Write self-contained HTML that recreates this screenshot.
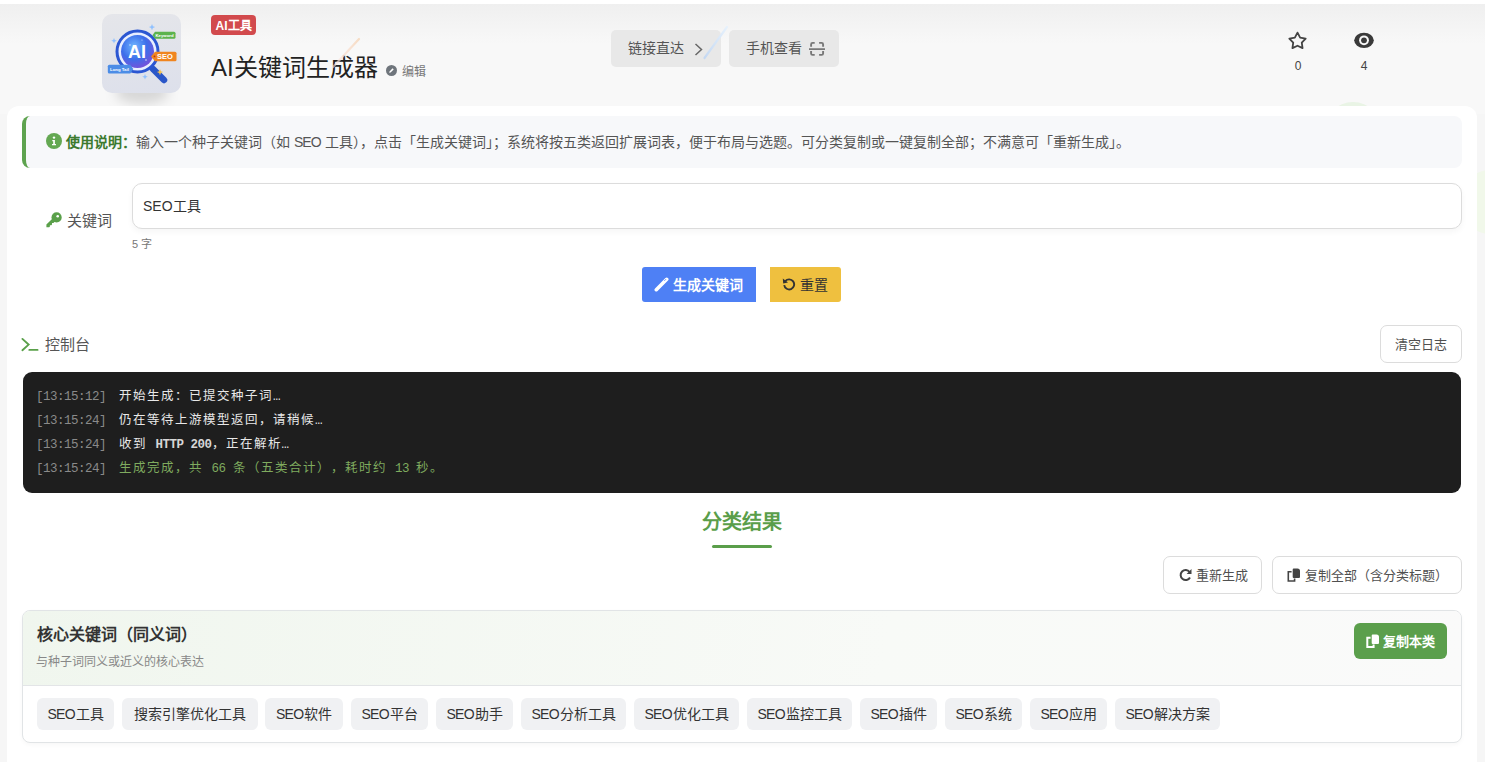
<!DOCTYPE html>
<html lang="zh-CN">
<head>
<meta charset="utf-8">
<style>
*{box-sizing:border-box;margin:0;padding:0}
html,body{width:1485px;height:762px;overflow:hidden}
body{font-family:"Liberation Sans",sans-serif;background:#f6f6f6;position:relative;color:#333}
.abs{position:absolute}
svg{display:block}
#topstrip{left:0;top:0;width:1485px;height:4px;background:#fff}
#hdr{left:0;top:4px;width:1485px;height:110px;background:linear-gradient(#efefef,#f8f8f8 40px,#f8f8f8)}
#logo{left:102px;top:14px;width:79px;height:79px;border-radius:10px;background:linear-gradient(170deg,#e5e6ea,#dde0eb)}
#logoshadow{left:115px;top:80px;width:54px;height:24px;border-radius:50%;background:rgba(0,0,0,.13);filter:blur(6px)}
#badge{left:211px;top:15px;width:45px;height:20px;border-radius:4px;background:#d24a4d;color:#fff;font-size:12px;font-weight:bold;line-height:22px;text-align:center}
#title{left:211px;top:52px;font-size:24px;line-height:32px;color:#222;white-space:nowrap}
#edit{left:402px;top:65px;font-size:12px;color:#777;white-space:nowrap;line-height:14px}
.tbtn{top:30px;width:110px;height:37px;border-radius:5px;background:#e8e8e8;color:#555;font-size:14px;line-height:37px;white-space:nowrap}
.stat{font-size:12px;color:#444;line-height:14px;text-align:center;width:30px}
#card{left:7px;top:106px;width:1470px;height:700px;background:#fff;border-radius:12px}
#notice{left:22px;top:116px;width:1440px;height:52px;background:#f7f8fa;border-left:4px solid #5ea34f;border-radius:8px;font-size:14px;line-height:52px;color:#555;white-space:nowrap}
#notice b{color:#3c7a2e}
#kwlabel{left:67px;top:211.5px;font-size:15px;line-height:18px;color:#555}
#input{left:132px;top:183px;width:1330px;height:46px;border:1px solid #dcdcdc;border-radius:10px;background:#fff;box-shadow:0 3px 6px rgba(0,0,0,.04);font-size:14px;line-height:44px;padding-left:10px;color:#333}
#count{left:132px;top:238px;font-size:11px;color:#777;line-height:13px}
.btn{height:35px;top:267px;font-size:14px;line-height:37px;white-space:nowrap}
#gen{left:642px;width:114px;background:#4e80f5;color:#fff;border-radius:3px 0 0 3px;font-weight:bold}
#reset{left:770px;width:71px;background:#efc03f;color:#333;border-radius:0 3px 3px 0}
#conlabel{left:45px;top:336px;font-size:15px;line-height:18px;color:#555}
.obtn{border:1px solid #dcdcdc;border-radius:7px;background:#fff;font-size:13px;color:#505050;white-space:nowrap;text-align:center}
#console{text-spacing-trim:space-all;left:23px;top:372px;width:1438px;height:121px;background:#1e1e1e;border-radius:9px;font-family:"Liberation Mono",monospace;font-size:12.5px;letter-spacing:-0.5px;color:#e8e8e8;padding:14px 0 0 13px}
#console div{height:23.9px;line-height:23.9px;white-space:nowrap}
#console .t{color:#8a8a8a;margin-right:13px}
#console .c{letter-spacing:1px}
#console .g{color:#7fab5f}
#console b{color:#d6d6d6}
#restitle{left:702px;top:509px;font-size:20px;line-height:26px;font-weight:bold;color:#5a9e4a;white-space:nowrap}
#resbar{left:712px;top:545px;width:60px;height:3px;border-radius:2px;background:#5a9e4a}
#cat{left:22px;top:610px;width:1440px;height:133px;border:1px solid #e1e4e6;border-radius:8px;background:#fff;overflow:hidden;box-shadow:0 2px 4px rgba(0,0,0,.03)}
#cathead{left:0;top:0;width:1438px;height:75px;border-bottom:1px solid #e3e5e7;background:linear-gradient(100deg,#f0f6ee,#f8faf7 60%,#fafafa)}
#cattitle{left:37px;top:625px;font-size:16px;line-height:20px;font-weight:bold;color:#333;white-space:nowrap}
#catsub{left:36px;top:655px;font-size:12px;line-height:15px;color:#888;white-space:nowrap}
#copycat{left:1354px;top:623px;width:93px;height:36px;border-radius:6px;background:#5b9f4c;color:#fff;font-size:13px;font-weight:bold;line-height:37px;white-space:nowrap}
.chip i{font-style:normal;letter-spacing:-0.7px}
.chip{top:698px;height:32px;border-radius:6px;background:#f0f1f3;color:#333;font-size:14px;line-height:32px;text-align:center;white-space:nowrap}
</style>
</head>
<body>
<div class="abs" id="topstrip"></div>
<div class="abs" id="hdr"></div>

<!-- logo -->
<div class="abs" id="logoshadow"></div>
<div class="abs" id="logo">
<svg width="79" height="79" viewBox="0 0 79 79">
  <defs>
    <radialGradient id="lens" cx="40%" cy="35%" r="70%">
      <stop offset="0" stop-color="#6fb6ff"/>
      <stop offset="0.55" stop-color="#3d6fea"/>
      <stop offset="1" stop-color="#7a4fd8"/>
    </radialGradient>
  </defs>
  <line x1="51" y1="55" x2="62" y2="66" stroke="#2a56c8" stroke-width="6.5" stroke-linecap="round"/>
  <circle cx="35.5" cy="37.5" r="20.5" fill="#e8eeff" stroke="#2b56d2" stroke-width="3"/>
  <circle cx="35.5" cy="37.5" r="16.5" fill="url(#lens)"/>
  <text x="35" y="43.5" text-anchor="middle" font-family="Liberation Sans" font-weight="bold" font-size="18" fill="#fff">AI</text>
  <path d="M53 17.7 h19 a1.5 1.5 0 0 1 1.5 1.5 v4 a1.5 1.5 0 0 1 -1.5 1.5 h-19 l-2.5 -3.5 z" fill="#5cb34e"/>
  <text x="62.5" y="22.7" text-anchor="middle" font-family="Liberation Sans" font-weight="bold" font-size="4.3" fill="#fff">Keyword</text>
  <path d="M53 37.7 h20 a1.5 1.5 0 0 1 1.5 1.5 v6.5 a1.5 1.5 0 0 1 -1.5 1.5 h-20 l-4 -4.7 z" fill="#f0851f"/>
  <circle cx="52.5" cy="42.4" r="0.9" fill="#b8321a"/>
  <text x="63" y="45.3" text-anchor="middle" font-family="Liberation Sans" font-weight="bold" font-size="7.5" fill="#fff">SEO</text>
  <path d="M7.3 50.8 h21 l3 4.3 l-3 4.3 h-21 a1.5 1.5 0 0 1 -1.5 -1.5 v-5.6 a1.5 1.5 0 0 1 1.5 -1.5 z" fill="#4b8ce6"/>
  <text x="17.5" y="56.6" text-anchor="middle" font-family="Liberation Sans" font-weight="bold" font-size="4.3" fill="#fff">Long Tail</text>
  <path d="M12 24 l0.8 2 l2 0.8 l-2 0.8 l-0.8 2 l-0.8 -2 l-2 -0.8 l2 -0.8 z" fill="#8ec0ff"/>
  <path d="M50 10 l0.9 2.2 l2.2 0.9 l-2.2 0.9 l-0.9 2.2 l-0.9 -2.2 l-2.2 -0.9 l2.2 -0.9 z" fill="#8ec0ff"/>
  <path d="M58 55 l0.9 2.2 l2.2 0.9 l-2.2 0.9 l-0.9 2.2 l-0.9 -2.2 l-2.2 -0.9 l2.2 -0.9 z" fill="#f3c14e"/>
  <path d="M43 60 l0.8 2 l2 0.8 l-2 0.8 l-0.8 2 l-0.8 -2 l-2 -0.8 l2 -0.8 z" fill="#8ec0ff"/>
  <circle cx="28" cy="31" r="0.7" fill="#fff" opacity=".8"/>
  <circle cx="44" cy="46" r="0.8" fill="#fff" opacity=".8"/>
  <circle cx="40" cy="26" r="0.6" fill="#fff" opacity=".7"/>
</svg>
</div>

<div class="abs" id="badge">AI工具</div>
<div class="abs" id="title">AI关键词生成器</div>
<svg class="abs" style="left:386px;top:65px" width="11" height="11" viewBox="0 0 11 11"><circle cx="5.5" cy="5.5" r="5.5" fill="#6f757c"/><path d="M3.2 7.8 L3.5 6.4 L6.6 3.3 L7.7 4.4 L4.6 7.5 Z" fill="#fff"/></svg>
<div class="abs" id="edit">编辑</div>

<div class="abs tbtn" style="left:611px;padding-left:17px">链接直达</div>
<svg class="abs" style="left:694px;top:43px" width="10" height="13" viewBox="0 0 10 13"><path d="M1.5 1 L7.5 6.5 L1.5 12" fill="none" stroke="#666" stroke-width="1.5"/></svg>
<svg class="abs" style="left:700px;top:22px" width="32" height="40" viewBox="0 0 32 40"><defs><linearGradient id="sb" x1="0" y1="1" x2="1" y2="0"><stop offset="0" stop-color="#c4d8f2"/><stop offset="1" stop-color="#e6f1fc"/></linearGradient></defs><line x1="4.5" y1="36" x2="27" y2="5" stroke="url(#sb)" stroke-width="2.2" stroke-linecap="round"/></svg>
<svg class="abs" style="left:328px;top:34px" width="36" height="38" viewBox="0 0 36 38"><defs><linearGradient id="so" x1="0" y1="1" x2="1" y2="0"><stop offset="0" stop-color="#fbe4e0" stop-opacity="0.6"/><stop offset="1" stop-color="#f6dcc4"/></linearGradient></defs><line x1="5" y1="33" x2="31" y2="5" stroke="url(#so)" stroke-width="2.2" stroke-linecap="round"/></svg>
<div class="abs tbtn" style="left:729px;padding-left:17px">手机查看</div>
<svg class="abs" style="left:809px;top:40px" width="16" height="17" viewBox="0 0 16 17"><path d="M2.1 6.7 V4.4 a1.5 1.5 0 0 1 1.5 -1.5 H5.7 M10.1 2.9 H12.6 a1.5 1.5 0 0 1 1.5 1.5 V6.7 M14.1 11.1 V13.4 a1.5 1.5 0 0 1 -1.5 1.5 H10.1 M5.7 14.9 H3.6 a1.5 1.5 0 0 1 -1.5 -1.5 V11.1" fill="none" stroke="#777" stroke-width="1.9"/><line x1="0.3" y1="9.2" x2="15.7" y2="9.2" stroke="#777" stroke-width="1.8" stroke-linecap="round"/></svg>

<svg class="abs" style="left:1287px;top:30px" width="21" height="21" viewBox="0 0 21 21"><path d="M10.50 2.60 L13.15 7.56 L18.68 8.54 L14.78 12.59 L15.55 18.16 L10.50 15.70 L5.45 18.16 L6.22 12.59 L2.32 8.54 L7.85 7.56 Z" fill="none" stroke="#444" stroke-width="1.8" stroke-linejoin="round"/></svg>
<div class="abs stat" style="left:1283px;top:59px">0</div>
<svg class="abs" style="left:1353px;top:32px" width="22" height="17" viewBox="0 0 22 17"><ellipse cx="11" cy="8.3" rx="9.8" ry="7.6" fill="#3a3a3a"/><circle cx="11" cy="8.3" r="4.9" fill="#f8f8f8"/><circle cx="11" cy="8.3" r="2.9" fill="#3a3a3a"/></svg>
<div class="abs stat" style="left:1349px;top:59px">4</div>

<!-- main card -->
<div class="abs" style="left:1324px;top:102px;width:58px;height:58px;border-radius:50%;background:#e9f4e5"></div>
<div class="abs" style="left:1460px;top:170px;width:60px;height:64px;border-radius:50%;background:#f1f8ea"></div>
<div class="abs" id="card"></div>

<div class="abs" id="notice"><span style="display:inline-block;width:19px"></span><span style="display:inline-block;width:21px"></span><b>使用说明：</b>输入一个种子关键词（如 <span style="letter-spacing:-0.9px">SEO</span> 工具），点击「生成关键词」；系统将按五类返回扩展词表，便于布局与选题。可分类复制或一键复制全部；不满意可「重新生成」。</div>
<svg class="abs" style="left:45.5px;top:133px" width="16" height="16" viewBox="0 0 16 16"><circle cx="8" cy="8" r="8" fill="#64a852"/><circle cx="8" cy="4.6" r="1.2" fill="#fff"/><path d="M6.3 7 H8.9 V11 H10 V12.2 H6 V11 H7.2 V8.2 H6.3 Z" fill="#fff"/></svg>

<svg class="abs" style="left:46px;top:212px" width="16" height="16" viewBox="0 0 16 16"><circle cx="10.6" cy="5.4" r="5.1" fill="#5aa04a"/><circle cx="11.7" cy="4.3" r="1.3" fill="#fff"/><path d="M6.8 6.2 L0.4 12.6 L0.4 15.3 L3.2 15.3 L3.9 14.6 L3.9 13.2 L5.3 13.2 L6 12.5 L6 11.1 L7.4 11.1 L9.8 8.7 Z" fill="#5aa04a"/></svg>
<div class="abs" id="kwlabel">关键词</div>
<div class="abs" id="input">SEO工具</div>
<div class="abs" id="count">5 字</div>

<div class="abs btn" id="gen"><span style="display:inline-block;width:31px"></span>生成关键词</div>
<svg class="abs" style="left:654px;top:277px" width="15" height="15" viewBox="0 0 15 15"><line x1="2.3" y1="12.7" x2="12.7" y2="2.3" stroke="#fff" stroke-width="3.6" stroke-linecap="round"/><line x1="10.6" y1="3.6" x2="11.8" y2="2.4" stroke="#4e80f5" stroke-width="0.8" stroke-linecap="round"/></svg>
<div class="abs btn" id="reset"><span style="display:inline-block;width:30px"></span>重置</div>
<svg class="abs" style="left:782px;top:277px" width="14" height="14" viewBox="0 0 14 14"><path d="M3.3 4.2 A5 5 0 1 1 2.2 8.2" fill="none" stroke="#333" stroke-width="1.9"/><path d="M0.8 1.4 L1.2 6.4 L6 5.4 Z" fill="#333"/></svg>

<!-- console -->
<svg class="abs" style="left:21px;top:337px" width="18" height="15" viewBox="0 0 18 15"><path d="M1.4 1.9 L7.6 7.6 L1.4 13.2" fill="none" stroke="#5aa04a" stroke-width="1.9" stroke-linecap="round"/><line x1="8.3" y1="12.9" x2="16.6" y2="12.9" stroke="#5aa04a" stroke-width="1.8" stroke-linecap="round"/></svg>
<div class="abs" id="conlabel">控制台</div>
<div class="abs obtn" style="left:1380px;top:325px;width:82px;height:38px;line-height:37px">清空日志</div>
<div class="abs" id="console">
<div><span class="t">[13:15:12]</span><span class="c">开始生成：已提交种子词</span>…</div>
<div><span class="t">[13:15:24]</span><span class="c">仍在等待上游模型返回，请稍候</span>…</div>
<div><span class="t">[13:15:24]</span><span class="c">收到 </span><b>HTTP 200</b><span class="c">，正在解析</span>…</div>
<div class="g"><span class="t">[13:15:24]</span><span class="c">生成完成，共 </span>66 <span class="c">条（五类合计），耗时约 </span>13 <span class="c">秒。</span></div>
</div>

<!-- results -->
<div class="abs" id="restitle">分类结果</div>
<div class="abs" id="resbar"></div>

<div class="abs obtn" style="left:1163px;top:556px;width:99px;height:38px;line-height:37px"><span style="display:inline-block;width:18px"></span>重新生成</div>
<svg class="abs" style="left:1179px;top:568px" width="13" height="14" viewBox="0 0 13 14"><path d="M10.6 4 A5 5 0 1 0 11 9.5" fill="none" stroke="#444" stroke-width="2"/><path d="M12.5 1 L12.5 6 L7.6 6 Z" fill="#444"/></svg>
<div class="abs obtn" style="left:1272px;top:556px;width:190px;height:38px;line-height:37px"><span style="display:inline-block;width:18px"></span>复制全部（含分类标题）</div>
<svg class="abs" style="left:1287px;top:568px" width="14" height="14" viewBox="0 0 14 14"><path d="M5.7 1.5 a1 1 0 0 1 1 -1 H10.5 a2.5 2.5 0 0 1 2.5 2.5 V9 a1 1 0 0 1 -1 1 H6.7 a1 1 0 0 1 -1 -1 Z" fill="#444"/><path d="M4.6 3.8 H1.3 V13 H7.6 V10.6" fill="none" stroke="#444" stroke-width="1.6"/></svg>

<div class="abs" id="cat"><div class="abs" id="cathead"></div></div>
<div class="abs" id="cattitle">核心关键词（同义词）</div>
<div class="abs" id="catsub">与种子词同义或近义的核心表达</div>
<div class="abs" id="copycat"><span style="display:inline-block;width:29px"></span>复制本类</div>
<svg class="abs" style="left:1366px;top:634px" width="14" height="14" viewBox="0 0 14 14"><path d="M5.7 1.5 a1 1 0 0 1 1 -1 H10.5 a2.5 2.5 0 0 1 2.5 2.5 V9 a1 1 0 0 1 -1 1 H6.7 a1 1 0 0 1 -1 -1 Z" fill="#fff"/><path d="M4.6 3.8 H1.3 V13 H7.6 V10.6" fill="none" stroke="#fff" stroke-width="2"/></svg>

<div class="abs chip" style="left:37px;width:77px"><i>SE</i>O工具</div>
<div class="abs chip" style="left:122px;width:136px">搜索引擎优化工具</div>
<div class="abs chip" style="left:265px;width:78px"><i>SE</i>O软件</div>
<div class="abs chip" style="left:351px;width:77px"><i>SE</i>O平台</div>
<div class="abs chip" style="left:436px;width:77px"><i>SE</i>O助手</div>
<div class="abs chip" style="left:521px;width:105px"><i>SE</i>O分析工具</div>
<div class="abs chip" style="left:634px;width:105px"><i>SE</i>O优化工具</div>
<div class="abs chip" style="left:747px;width:105px"><i>SE</i>O监控工具</div>
<div class="abs chip" style="left:860px;width:77px"><i>SE</i>O插件</div>
<div class="abs chip" style="left:945px;width:77px"><i>SE</i>O系统</div>
<div class="abs chip" style="left:1030px;width:77px"><i>SE</i>O应用</div>
<div class="abs chip" style="left:1115px;width:105px"><i>SE</i>O解决方案</div>
</body>
</html>
